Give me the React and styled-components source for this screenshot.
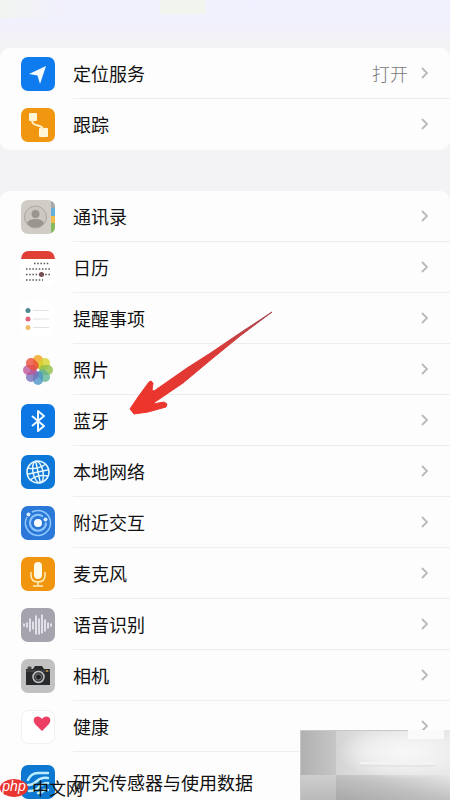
import React from "react";
import styled, { createGlobalStyle } from "styled-components";

const GlobalStyle = createGlobalStyle`
    *, *::before, *::after {
    box-sizing: border-box;
    }

    body {
    margin: 0;
    background-color: #f3f2f5;
    font-family: "Noto Sans CJK SC", "Noto Sans", sans-serif;
    }
    `

const StyledScreen = styled.main`
    position: relative;
    width: 100%;
    height: 100vh;
    overflow: hidden;
    padding-top: 48px;
    background:
        linear-gradient(#f2f4ee, #f2f4ee) 160px 0 / 46px 14px no-repeat,
        linear-gradient(90deg, #f2f4f0, rgba(242, 244, 240, 0)) 0 0 / 68px 18px no-repeat,
        linear-gradient(#f1f0fe, #f1f0fd 22px, #f3f2f5 44px) 0 0 / 100% 48px no-repeat,
        #f3f2f5;
    `
const StyledGroup = styled.ul`
    margin: 0 0 41px;
    padding: 0;
    list-style: none;
    overflow: hidden;
    border-radius: 10px;
    background-color: #fdfdfd;
    `
const StyledRow = styled.a`
    display: flex;
    align-items: center;
    height: ${({ $tall }) => ($tall ? "60px" : "51px")};
    padding-left: 21px;
    color: #111;
    text-decoration: none;
    `
const StyledIcon = styled.svg`
    flex: none;
    width: 34px;
    height: 34px;
    margin-right: 18px;
    `
const StyledBody = styled.div`
    flex: 1;
    display: flex;
    align-items: center;
    align-self: stretch;
    padding-right: 20px;
    border-bottom: 1px solid ${({ $last }) => ($last ? "transparent" : "#eeeeef")};
    `
const StyledLabel = styled.span`
    flex: 1;
    font-size: 18px;
    line-height: 26px;
    `
const StyledValue = styled.span`
    margin-right: 10px;
    font-size: 18px;
    font-weight: 300;
    line-height: 26px;
    color: #78787a;
    `
const StyledChevron = styled.svg`
    flex: none;
    width: 12px;
    height: 14px;
    `
const StyledArrow = styled.svg`
    position: absolute;
    top: 308px;
    left: 126px;
    width: 150px;
    height: 110px;
    pointer-events: none;
    `
const StyledSmudge = styled.svg`
    position: absolute;
    right: 0;
    bottom: 0;
    width: 150px;
    height: 70px;
    `
const StyledWatermark = styled.div`
    position: absolute;
    left: 0;
    bottom: 0;
    display: flex;
    align-items: center;
    gap: 4px;
    height: 24px;
    `
const StyledBadge = styled.span`
    width: 28px;
    height: 18px;
    border-radius: 50%;
    background-color: #e8352f;
    color: #fff;
    font: italic 14px/15px "Liberation Sans", sans-serif;
    text-align: center;
    `
const StyledSite = styled.span`
    font-size: 17px;
    line-height: 24px;
    color: #111;
    `

const Tile = ({ fill, children }) => (
    <StyledIcon viewBox="0 0 34 34" aria-hidden="true">
        <rect width="34" height="34" rx="7" fill={fill} />
        {children}
    </StyledIcon>
)

const LocationIcon = () => (
    <Tile fill="#0e7bee">
        <path d="M25 9 8 17l8.500 1.500L19 27Z" fill="#f4fbff" />
    </Tile>
)

const TrackingIcon = () => (
    <Tile fill="#f0960f">
        <rect x="8" y="5" width="8" height="8" rx="1" fill="#fff6d8" />
        <rect x="18" y="20" width="9" height="9" rx="1" fill="#fff6d8" />
        <path d="M11 12c0 8 11 3 11 10" fill="none" stroke="#fff0c8" strokeWidth="2" />
    </Tile>
)

const ContactsIcon = () => (
    <StyledIcon viewBox="0 0 34 34" aria-hidden="true">
        <rect width="34" height="34" rx="7" fill="#d0cdc6" />
        <path d="M30 1Q34 2.500 34 7v4h-4Z" fill="#a5a7a8" />
        <path d="M30 8h4v8h-4Z" fill="#65afd9" />
        <path d="M30 16h4v7h-4Z" fill="#f0bd4b" />
        <path d="M30 23h4v4q0 4.500-4 6Z" fill="#88b95e" />
        <circle cx="14.500" cy="17" r="11" fill="#cbc8c2" stroke="#aaa7a2" />
        <circle cx="14.500" cy="14" r="4" fill="#99958f" />
        <path d="M6 23q2-4 8.500-4t8.500 4q-3 4.500-8.500 4.500T6 23Z" fill="#99958f" />
    </StyledIcon>
)

const CalendarIcon = () => (
    <StyledIcon viewBox="0 0 34 34" aria-hidden="true">
        <rect width="34" height="34" rx="7" fill="#fff" />
        <path d="M0 8Q1 0 8 0h18q7 0 8 8Z" fill="#df3f35" />
        <g stroke="#555" strokeWidth="1.500" strokeDasharray="1.500 1.700">
            <path d="M13 12.500h16M5 18h24M5 23.500h24M5 29h17" />
        </g>
        <circle cx="20.500" cy="23.500" r="2.500" fill="#754d52" />
    </StyledIcon>
)

const RemindersIcon = () => (
    <StyledIcon viewBox="0 0 34 34" aria-hidden="true">
        <rect width="34" height="34" rx="7" fill="#fff" />
        <path d="M12 8.500h16M12 17h16M12 25.500h16" stroke="#e2e2e4" />
        <circle cx="7" cy="8.500" r="2.500" fill="#4d8790" />
        <circle cx="7" cy="17" r="2.500" fill="#e0637a" />
        <circle cx="7" cy="25.500" r="2.500" fill="#edbd68" />
    </StyledIcon>
)

const petals = ["#f3a01d", "#d6d32c", "#8fbe48", "#60b492", "#4b93c6", "#7571b9", "#bd5699", "#e94c38"]

const PhotosIcon = () => (
    <StyledIcon viewBox="0 0 34 34" aria-hidden="true">
        {petals.map((color, i) => (
            <rect
                key={color}
                x="12"
                y="2"
                width="10"
                height="14"
                rx="5"
                fill={color}
                fillOpacity="0.8"
                transform={`rotate(${i * 45} 17 17)`}
            />
        ))}
        <circle cx="17" cy="17" r="1.500" fill="#fff" />
    </StyledIcon>
)

const BluetoothIcon = () => (
    <Tile fill="#0d78e3">
        <path d="m11 12 12 10-6 5V7l6 5-12 10" fill="none" stroke="#eef9ff" strokeWidth="2" strokeLinejoin="round" />
    </Tile>
)

const NetworkIcon = () => (
    <Tile fill="#0d78d8">
        <g fill="none" stroke="#e3f5ff" strokeWidth="1.500" transform="rotate(-12 17 17)">
            <circle cx="17" cy="17" r="11" />
            <ellipse cx="17" cy="17" rx="5" ry="11" />
            <path d="M17 6v22M6 17h22M8 11q9 4 18 0M8 23q9-4 18 0" />
        </g>
    </Tile>
)

const NearbyIcon = () => (
    <Tile fill="#2c78d8">
        <g fill="none" stroke="#8fc8ff">
            <path d="M11 6a12.500 12.500 0 1 1-5 5" strokeWidth="1.500" />
            <path d="M22 10.500a8 8 0 1 0 3 6" strokeWidth="2" />
        </g>
        <circle cx="17" cy="17" r="4" fill="#fff" />
        <circle cx="7.500" cy="8.500" r="2" fill="#d9f0ff" />
        <circle cx="24.500" cy="13.500" r="2" fill="#d9f0ff" />
    </Tile>
)

const MicrophoneIcon = () => (
    <Tile fill="#f2950e">
        <rect x="13" y="5" width="8" height="17" rx="4" fill="#fffbea" />
        <path d="M10 15v3q0 7 7 7t7-7v-3M17 25v4M12 29h10" fill="none" stroke="#fff0c0" strokeWidth="1.500" />
    </Tile>
)

const SpeechIcon = () => (
    <Tile fill="#a5a3ad">
        <path
            d="M3 16v2M6 15v4M9 11v12M12 14v7M15 8v18M18 11v15M21 7v18M24 12v11M27 15v5M30 16v2"
            stroke="#f5f4fa"
            strokeWidth="1.500"
            strokeLinecap="round"
        />
    </Tile>
)

const CameraIcon = () => (
    <Tile fill="#c2c1c1">
        <path d="M5 10h7l2-3h7l2 3h6v16H5Z" fill="#292a2c" />
        <path d="M7 8h3v2H7ZM5 12h24" fill="#292a2c" stroke="#555" />
        <circle cx="17.500" cy="18" r="5.500" fill="#35383a" stroke="#c1c3c4" strokeWidth="1.500" />
        <circle cx="17.500" cy="18" r="3" fill="#202427" stroke="#777b7e" />
        <circle cx="26" cy="12" r="1" fill="#c79b3b" />
    </Tile>
)

const HealthIcon = () => (
    <StyledIcon viewBox="0 0 34 34" aria-hidden="true">
        <rect x="0.500" y="0.500" width="33" height="33" rx="7" fill="#fff" stroke="#f2f1f2" />
        <path d="M21 21 14.500 14.500C11 10.500 13 6.500 16.500 6.500c2.500 0 3.800 1.500 4.500 2.500.7-1 2-2.500 4.500-2.500 3.500 0 5.500 4 2 8Z" fill="#ed3f64" />
    </StyledIcon>
)

const ResearchIcon = () => (
    <Tile fill="#0d78d2">
        <g fill="none" stroke="#b9edff" strokeWidth="2.500" strokeLinecap="round">
            <path d="M7 15q3-7 10-7h10M7 20q5 0 9-4t11-3M8 26q7 0 10-4t9-4M17 28q4 0 6-3h4" />
        </g>
    </Tile>
)

const Chevron = () => (
    <StyledChevron viewBox="0 0 12 14" aria-hidden="true">
        <path d="m4 2 5 5-5 5" fill="none" stroke="#b9b9bc" strokeWidth="1.800" />
    </StyledChevron>
)

const services = [
    { label: "定位服务", value: "打开", Icon: LocationIcon },
    { label: "跟踪", Icon: TrackingIcon },
]

const permissions = [
    { label: "通讯录", Icon: ContactsIcon },
    { label: "日历", Icon: CalendarIcon },
    { label: "提醒事项", Icon: RemindersIcon },
    { label: "照片", Icon: PhotosIcon },
    { label: "蓝牙", Icon: BluetoothIcon },
    { label: "本地网络", Icon: NetworkIcon },
    { label: "附近交互", Icon: NearbyIcon },
    { label: "麦克风", Icon: MicrophoneIcon },
    { label: "语音识别", Icon: SpeechIcon },
    { label: "相机", Icon: CameraIcon },
    { label: "健康", Icon: HealthIcon },
    { label: "研究传感器与使用数据", Icon: ResearchIcon, tall: true },
]

const Group = ({ items }) => (
    <StyledGroup>
        {items.map(({ label, value, Icon, tall }, i) => (
            <li key={label}>
                <StyledRow href="#" $tall={tall}>
                    <Icon />
                    <StyledBody $last={i === items.length - 1}>
                        <StyledLabel>{label}</StyledLabel>
                        {value && <StyledValue>{value}</StyledValue>}
                        <Chevron />
                    </StyledBody>
                </StyledRow>
            </li>
        ))}
    </StyledGroup>
)

const Arrow = () => (
    <StyledArrow viewBox="0 0 150 110" aria-hidden="true">
        <defs>
            <linearGradient id="arrow" x1="1" y1="0" x2="0" y2="1">
                <stop offset="0" stopColor="#a34750" />
                <stop offset="0.350" stopColor="#d83b39" />
                <stop offset="1" stopColor="#f0342a" />
            </linearGradient>
        </defs>
        <path
            d="M146 4 111 27 86 44 61 60 28 83 26 82 27 75 25 73 23 74 12 89 4 101 8 106 22 104 40 99 41 96 38 94 27 96 29 94 57 75 87 50 114 28Z"
            fill="url(#arrow)"
            stroke="url(#arrow)"
            strokeLinejoin="round"
        />
    </StyledArrow>
)

const Smudge = () => (
    <StyledSmudge viewBox="0 0 150 70" preserveAspectRatio="none" aria-hidden="true">
        <defs>
            <linearGradient id="base" x1="0" y1="0" x2="1" y2="0">
                <stop offset="0" stopColor="#c4c4c4" />
                <stop offset="0.400" stopColor="#dedede" />
                <stop offset="1" stopColor="#e8e8e8" />
            </linearGradient>
            <linearGradient id="corner" x1="0" y1="0" x2="1" y2="0">
                <stop offset="0" stopColor="#b0b0b0" />
                <stop offset="1" stopColor="#c6c6c6" />
            </linearGradient>
            <linearGradient id="left" x1="0" y1="0" x2="0" y2="1">
                <stop offset="0" stopColor="#cecece" />
                <stop offset="1" stopColor="#bababa" />
            </linearGradient>
            <linearGradient id="lower" x1="0" y1="1" x2="1" y2="0">
                <stop offset="0" stopColor="#a8a8a8" />
                <stop offset="0.500" stopColor="#c0c0c0" />
                <stop offset="1" stopColor="#e6e6e6" />
            </linearGradient>
            <radialGradient id="glow">
                <stop offset="0" stopColor="#f8f8f8" />
                <stop offset="0.500" stopColor="#f4f4f4" stopOpacity="0.800" />
                <stop offset="1" stopColor="#f6f6f6" stopOpacity="0" />
            </radialGradient>
        </defs>
        <rect width="150" height="70" fill="url(#base)" />
        <rect width="36" height="45" fill="url(#corner)" />
        <rect y="45" width="36" height="25" fill="url(#left)" />
        <rect x="36" y="45" width="114" height="25" fill="url(#lower)" />
        <ellipse cx="104" cy="22" rx="66" ry="27" fill="url(#glow)" />
        <path d="M60 33h75" stroke="#f3f3f3" strokeWidth="2" />
        <path d="M60 36h75" stroke="#dcdcdc" />
        <rect x="108" width="36" height="9" fill="#fafafa" />
        <path d="M0 0.500h108M0.500 0v70" stroke="#c8c8c8" />
    </StyledSmudge>
)

export default function App() {

    return (
        <>
            <GlobalStyle />
            <StyledScreen>
                <Group items={services} />
                <Group items={permissions} />
                <Arrow />
                <Smudge />
                <StyledWatermark>
                    <StyledBadge>php</StyledBadge>
                    <StyledSite>中文网</StyledSite>
                </StyledWatermark>
            </StyledScreen>
        </>
    )
}
